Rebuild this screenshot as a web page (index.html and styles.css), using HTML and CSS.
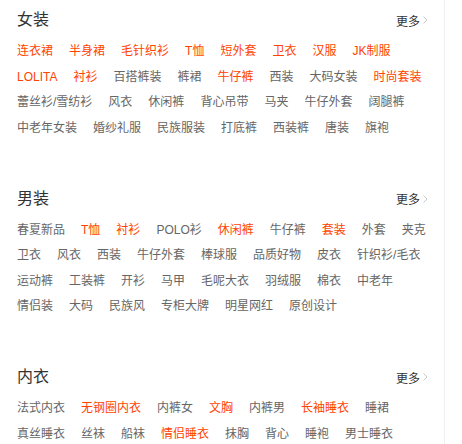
FILE: index.html
```html
<!DOCTYPE html>
<html lang="zh-CN">
<head>
<meta charset="utf-8">
<link rel="stylesheet" href="styles.css">
</head>
<body>
<div class="panel">
  <section class="cat">
    <div class="head"><h2 class="title">女装</h2><a class="more">更多<svg class="chev" width="5" height="8" viewBox="0 0 5 8"><polyline points="0.5,0.5 4,4 0.5,7.5" fill="none" stroke="#c8c8c8" stroke-width="1"/></svg></a></div>
    <div class="row"><a class="hot">连衣裙</a><a class="hot">半身裙</a><a class="hot">毛针织衫</a><a class="hot">T恤</a><a class="hot">短外套</a><a class="hot">卫衣</a><a class="hot">汉服</a><a class="hot">JK制服</a></div>
    <div class="row"><a class="hot">LOLITA</a><a class="hot">衬衫</a><a>百搭裤装</a><a>裤裙</a><a class="hot">牛仔裤</a><a>西装</a><a>大码女装</a><a class="hot">时尚套装</a></div>
    <div class="row"><a>蕾丝衫/雪纺衫</a><a>风衣</a><a>休闲裤</a><a>背心吊带</a><a>马夹</a><a>牛仔外套</a><a>阔腿裤</a></div>
    <div class="row"><a>中老年女装</a><a>婚纱礼服</a><a>民族服装</a><a>打底裤</a><a>西装裤</a><a>唐装</a><a>旗袍</a></div>
  </section>
  <section class="cat">
    <div class="head"><h2 class="title">男装</h2><a class="more">更多<svg class="chev" width="5" height="8" viewBox="0 0 5 8"><polyline points="0.5,0.5 4,4 0.5,7.5" fill="none" stroke="#c8c8c8" stroke-width="1"/></svg></a></div>
    <div class="row"><a>春夏新品</a><a class="hot">T恤</a><a class="hot">衬衫</a><a>POLO衫</a><a class="hot">休闲裤</a><a>牛仔裤</a><a class="hot">套装</a><a>外套</a><a>夹克</a></div>
    <div class="row"><a>卫衣</a><a>风衣</a><a>西装</a><a>牛仔外套</a><a>棒球服</a><a>品质好物</a><a>皮衣</a><a>针织衫/毛衣</a></div>
    <div class="row"><a>运动裤</a><a>工装裤</a><a>开衫</a><a>马甲</a><a>毛呢大衣</a><a>羽绒服</a><a>棉衣</a><a>中老年</a></div>
    <div class="row"><a>情侣装</a><a>大码</a><a>民族风</a><a>专柜大牌</a><a>明星网红</a><a>原创设计</a></div>
  </section>
  <section class="cat">
    <div class="head"><h2 class="title">内衣</h2><a class="more">更多<svg class="chev" width="5" height="8" viewBox="0 0 5 8"><polyline points="0.5,0.5 4,4 0.5,7.5" fill="none" stroke="#c8c8c8" stroke-width="1"/></svg></a></div>
    <div class="row"><a>法式内衣</a><a class="hot">无钢圈内衣</a><a>内裤女</a><a class="hot">文胸</a><a>内裤男</a><a class="hot">长袖睡衣</a><a>睡裙</a></div>
    <div class="row"><a>真丝睡衣</a><a>丝袜</a><a>船袜</a><a class="hot">情侣睡衣</a><a>抹胸</a><a>背心</a><a>睡袍</a><a>男士睡衣</a></div>
  </section>
</div>
</body>
</html>
```

FILE: styles.css
```css
html, body {
  margin: 0;
  padding: 0;
  background: #fff;
}
body {
  font-family: "Liberation Sans", "Noto Sans CJK SC", sans-serif;
  font-size: 12px;
  font-weight: 400;
  color: #666;
  height: 444px;
  overflow: hidden;
}
.panel {
  box-sizing: border-box;
  width: 445px;
  height: 444px;
  border-right: 1px solid #f0f0f0;
  padding: 0 16px 0 17px;
}
.cat + .cat {
  margin-top: 37.5px;
}
.head {
  height: 39px;
  display: flex;
  align-items: center;
  justify-content: space-between;
}
.title {
  margin: 0;
  font-size: 16px;
  font-weight: 400;
  color: #333;
  line-height: 39px;
}
.more {
  display: flex;
  align-items: center;
  gap: 3px;
  color: #333;
  font-size: 12px;
  margin-top: 1px;
}
.chev {
  display: block;
}
.row {
  display: flex;
  gap: 16px;
  height: 25.5px;
  line-height: 25.5px;
  white-space: nowrap;
}
.row a {
  color: #666;
}
.row a.hot {
  color: #f40;
}
```
